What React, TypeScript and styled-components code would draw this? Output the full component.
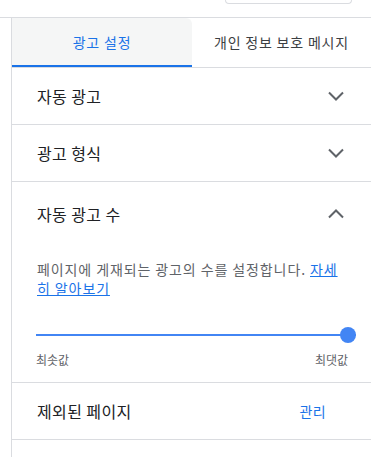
import React from "react";
import styled, { createGlobalStyle } from "styled-components";

const GlobalStyle = createGlobalStyle`
  html, body { margin: 0; padding: 0; background: #fff; }
  body { font-family: "Noto Sans CJK KR", "Noto Sans", Roboto, sans-serif; color: #202124; }
  * { box-sizing: border-box; }
`;

const Page = styled.div`
  width: 371px;
  height: 457px;
  overflow: hidden;
  display: flex;
  flex-direction: column;
`;

const TopBar = styled.div`
  height: 18px;
  flex-shrink: 0;
  border-bottom: 1px solid #dadce0;
  display: flex;
  justify-content: flex-end;
  padding-right: 19px;
`;

const SearchStub = styled.div`
  width: 127px;
  height: 4px;
  border: 1px solid #dadce0;
  border-top: none;
  border-radius: 0 0 5px 5px;
`;

const Body = styled.div`
  flex: 1;
  margin-left: 11px;
  border-left: 1px solid #dadce0;
  display: flex;
  flex-direction: column;
`;

const Tabs = styled.div`
  display: grid;
  grid-template-columns: 180px 1fr;
  border-bottom: 1px solid #dadce0;
`;

const Tab = styled.div<{ $active?: boolean }>`
  height: 49px;
  display: flex;
  align-items: center;
  justify-content: center;
  font-size: 14px;
  letter-spacing: 0.8px;
  padding-top: 1px;
  color: ${(p) => (p.$active ? "#1a73e8" : "#3c4043")};
  background: ${(p) => (p.$active ? "#f5f6f6" : "transparent")};
  border-radius: 0 6px 0 0;
  border-bottom: 2px solid ${(p) => (p.$active ? "#1a73e8" : "transparent")};
  white-space: nowrap;
`;

const Section = styled.div`
  border-bottom: 1px solid #dadce0;
`;

const RowHeader = styled.div<{ $tall?: boolean }>`
  height: ${(p) => (p.$tall ? "62px" : "56px")};
  display: flex;
  align-items: center;
  justify-content: space-between;
  padding: ${(p) => (p.$tall ? "2px" : "0")} 27px 0 25px;
`;

const RowTitle = styled.div`
  font-size: 16px;
  letter-spacing: 0.4px;
  color: #202124;
`;

const Chevron = styled.svg`
  width: 16px;
  height: 10px;
  display: block;
`;

const Description = styled.p`
  margin: 16px 25px 0 25px;
  font-size: 14px;
  line-height: 19px;
  letter-spacing: 0.9px;
  color: #5f6368;
`;

const Link = styled.a`
  color: #1a73e8;
  text-decoration: underline;
`;

const SliderWrap = styled.div`
  padding: 29px 15px 0 24px;
`;

const Track = styled.div`
  position: relative;
  height: 16px;
  display: flex;
  align-items: center;
`;

const TrackLine = styled.div`
  flex: 1;
  height: 2px;
  background: #4285f4;
`;

const Thumb = styled.div`
  position: absolute;
  right: 0;
  top: 0;
  width: 16px;
  height: 16px;
  border-radius: 50%;
  background: #4285f4;
`;

const Labels = styled.div`
  display: flex;
  justify-content: space-between;
  padding-right: 8px;
  margin-top: 8px;
  padding-bottom: 14px;
  font-size: 12px;
  color: #5f6368;
`;

const ManageLink = styled.a`
  font-size: 14px;
  letter-spacing: 0.4px;
  color: #1a73e8;
  text-decoration: none;
  margin-right: 18px;
`;

const ChevronDown = () => (
  <Chevron viewBox="0 0 16 10">
    <polyline points="1,1.5 8,8.5 15,1.5" fill="none" stroke="#5f6368" strokeWidth="2" />
  </Chevron>
);

const ChevronUp = () => (
  <Chevron viewBox="0 0 16 10">
    <polyline points="1,8.5 8,1.5 15,8.5" fill="none" stroke="#5f6368" strokeWidth="2" />
  </Chevron>
);

export default function App() {
  return (
    <>
      <GlobalStyle />
      <Page>
        <TopBar>
          <SearchStub />
        </TopBar>
        <Body>
          <Tabs>
            <Tab $active>광고 설정</Tab>
            <Tab>개인 정보 보호 메시지</Tab>
          </Tabs>
          <Section>
            <RowHeader>
              <RowTitle>자동 광고</RowTitle>
              <ChevronDown />
            </RowHeader>
          </Section>
          <Section>
            <RowHeader>
              <RowTitle>광고 형식</RowTitle>
              <ChevronDown />
            </RowHeader>
          </Section>
          <Section>
            <RowHeader $tall>
              <RowTitle>자동 광고 수</RowTitle>
              <ChevronUp />
            </RowHeader>
            <Description>
              페이지에 게재되는 광고의 수를 설정합니다. <Link href="#">자세히 알아보기</Link>
            </Description>
            <SliderWrap>
              <Track>
                <TrackLine />
                <Thumb />
              </Track>
              <Labels>
                <span>최솟값</span>
                <span>최댓값</span>
              </Labels>
            </SliderWrap>
          </Section>
          <Section>
            <RowHeader>
              <RowTitle>제외된 페이지</RowTitle>
              <ManageLink href="#">관리</ManageLink>
            </RowHeader>
          </Section>
        </Body>
      </Page>
    </>
  );
}
